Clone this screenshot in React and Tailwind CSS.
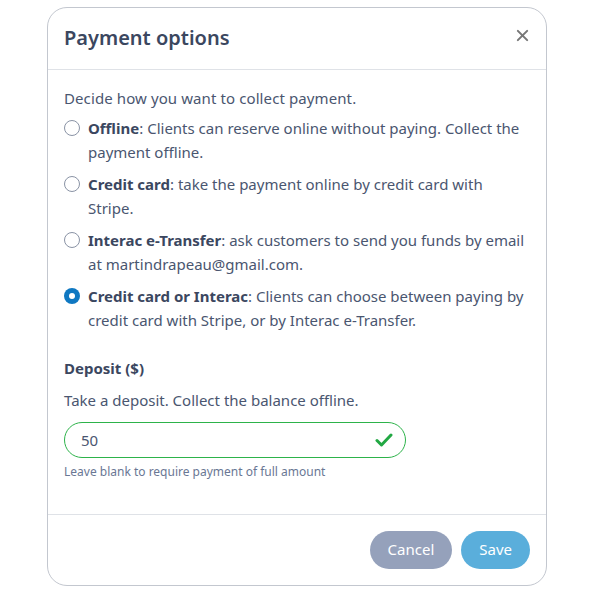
import React, { useState } from 'react';

const options = [
  { id: 'offline', label: 'Offline', line1: ': Clients can reserve online without paying. Collect the', line2: 'payment offline.' },
  { id: 'card', label: 'Credit card', line1: ': take the payment online by credit card with', line2: 'Stripe.' },
  { id: 'interac', label: 'Interac e-Transfer', line1: ': ask customers to send you funds by email', line2: 'at martindrapeau@gmail.com.' },
  { id: 'both', label: 'Credit card or Interac', line1: ': Clients can choose between paying by', line2: 'credit card with Stripe, or by Interac e-Transfer.' },
];

const App = () => {
  const [selected, setSelected] = useState('both');
  const [deposit, setDeposit] = useState('50');

  return (
    <div className="w-[600px] h-[591px] bg-white pt-[7px] pl-[47px]" style={{ fontFamily: '"Noto Sans", sans-serif' }}>
      <div className="w-[500px] h-[579px] border border-[#c3c7cf] rounded-[20px] flex flex-col text-[#4a5670]">
        <div className="flex items-center justify-between h-[62px] px-4 border-b border-[#dfe2e7]">
          <h1 className="text-[20px] font-semibold text-[#3b475f] pb-[1px]">Payment options</h1>
          <button className="text-[#777] text-[22px] leading-none mr-[1px] mb-[6px]">
            <svg width="13" height="13" viewBox="0 0 14 14" stroke="currentColor" strokeWidth="2.2" strokeLinecap="round">
              <path d="M2 2l10 10M12 2L2 12" />
            </svg>
          </button>
        </div>

        <div className="flex-1 px-4 pt-[16px] text-[15px] leading-6">
          <p className="tracking-[0.1px]">Decide how you want to collect payment.</p>
          <div className="flex flex-col gap-2 mt-[6px]">
            {options.map((o) => (
              <label key={o.id} className="flex items-start gap-[8px] cursor-pointer" onClick={() => setSelected(o.id)}>
                <span className="mt-[4px] shrink-0">
                  {selected === o.id ? (
                    <span className="w-[16px] h-[16px] rounded-full bg-[#0f78c2] flex items-center justify-center">
                      <span className="block w-[6px] h-[6px] rounded-full bg-white" />
                    </span>
                  ) : (
                    <span className="block w-[16px] h-[16px] rounded-full border border-[#8a93a5] bg-white" />
                  )}
                </span>
                <span className="whitespace-nowrap">
                  <b className="font-bold text-[#3b475f]">{o.label}</b>
                  {o.line1}
                  <br />
                  {o.line2}
                </span>
              </label>
            ))}
          </div>

          <h2 className="font-bold text-[#3b475f] mt-[24px]">Deposit ($)</h2>
          <p className="mt-2">Take a deposit. Collect the balance offline.</p>
          <div className="mt-[10px] w-[342px] h-[36px] border border-[#2db34a] rounded-full flex items-center pl-4 pr-3">
            <input
              value={deposit}
              onChange={(e) => setDeposit(e.target.value)}
              className="flex-1 outline-none bg-transparent text-[15px] text-[#4a5670]"
            />
            <svg width="18" height="14" viewBox="0 0 18 14" fill="none" stroke="#22a843" strokeWidth="3" strokeLinecap="round" strokeLinejoin="round">
              <path d="M2 7.5l4.5 4.5L16 2" />
            </svg>
          </div>
          <p className="text-[12px] text-[#6a7794] mt-[6px] leading-4">Leave blank to require payment of full amount</p>
        </div>

        <div className="border-t border-[#dfe2e7] h-[71px] flex items-center justify-end gap-[9px] px-4 pb-[1px]">
          <button className="h-[38px] px-[18px] rounded-full bg-[#95a1bb] text-white text-[15px]">Cancel</button>
          <button className="h-[38px] px-[18px] rounded-full bg-[#5aaedb] text-white text-[15px]">Save</button>
        </div>
      </div>
    </div>
  );
};

export default App;
